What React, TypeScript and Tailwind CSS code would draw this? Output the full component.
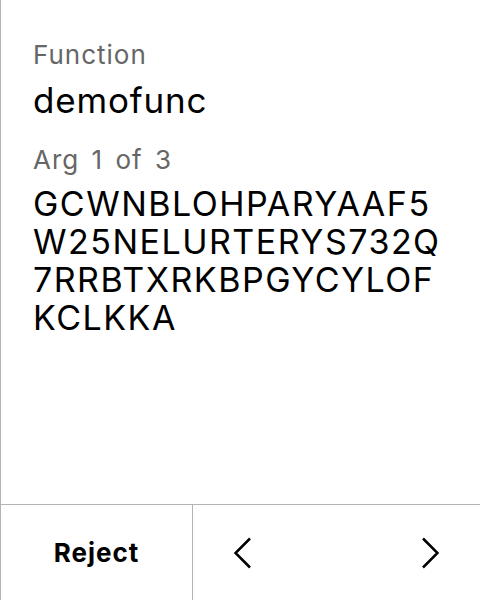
export default function App() {
  return (
    <div
      className="w-[480px] h-[600px] flex flex-col bg-white border-l border-[#b3b3b3] text-black"
      style={{ fontFamily: "Inter, 'Noto Sans', sans-serif" }}
    >
      <div className="flex-1 pl-[32px] pr-2 pt-[39px]">
        <div className="text-[26px] leading-[32px] tracking-[1px] text-[#666]">Function</div>
        <div className="mt-[9px] text-[35px] leading-[40px] tracking-[0.8px]">demofunc</div>
        <div className="mt-[24px] text-[26px] leading-[32px] tracking-[1px] [word-spacing:4px] text-[#666]">
          Arg 1 of 3
        </div>
        <div className="mt-[9px] text-[34px] leading-[38px] tracking-[1.5px] break-all">
          GCWNBLOHPARYAAF5
          <br />
          W25NELURTERYS732Q
          <br />
          7RRBTXRKBPGYCYLOF
          <br />
          KCLKKA
        </div>
      </div>
      <div className="h-[96px] flex border-t border-[#b3b3b3]">
        <button className="w-[192px] flex items-center justify-center text-[26px] font-bold tracking-[1px] border-r border-[#b3b3b3]">
          Reject
        </button>
        <div className="flex-1 flex items-center justify-between px-[41px]">
          <svg width="18" height="32" viewBox="0 0 18 32" fill="none" stroke="black" strokeWidth="2.5">
            <path d="M16 1.5 L1.5 16 L16 30.5" />
          </svg>
          <svg width="18" height="32" viewBox="0 0 18 32" fill="none" stroke="black" strokeWidth="2.5">
            <path d="M2 1.5 L16.5 16 L2 30.5" />
          </svg>
        </div>
      </div>
    </div>
  );
}
